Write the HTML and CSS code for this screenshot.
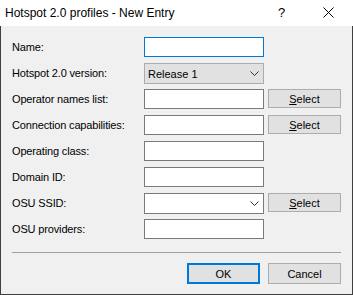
FILE: index.html
```html
<!DOCTYPE html>
<html>
<head>
<meta charset="utf-8">
<link rel="stylesheet" href="styles.css">
</head>
<body>
<div class="window">
  <div class="titlebar">
    <span class="title">Hotspot 2.0 profiles - New Entry</span>
    <span class="help">?</span>
    <span class="close">
      <svg width="11" height="11" viewBox="0 0 11 11"><path d="M0.5 0.5 L10.5 10.5 M10.5 0.5 L0.5 10.5" stroke="#000" stroke-width="1" fill="none"/></svg>
    </span>
  </div>
  <div class="client">
    <div class="form">
      <label class="lbl">Name:</label>
      <div class="input focused"></div>
      <div></div>

      <label class="lbl">Hotspot 2.0 version:</label>
      <div class="combo">
        <span>Release 1</span>
        <svg class="chev" width="9" height="5" viewBox="0 0 9 5"><path d="M0.5 0.5 L4.5 4.5 L8.5 0.5" stroke="#333" stroke-width="1" fill="none"/></svg>
      </div>
      <div></div>

      <label class="lbl">Operator names list:</label>
      <div class="input"></div>
      <button class="btn sel"><u>S</u>elect</button>

      <label class="lbl">Connection capabilities:</label>
      <div class="input"></div>
      <button class="btn sel"><u>S</u>elect</button>

      <label class="lbl">Operating class:</label>
      <div class="input"></div>
      <div></div>

      <label class="lbl">Domain ID:</label>
      <div class="input"></div>
      <div></div>

      <label class="lbl">OSU SSID:</label>
      <div class="input editcombo">
        <svg class="chev" width="9" height="5" viewBox="0 0 9 5"><path d="M0.5 0.5 L4.5 4.5 L8.5 0.5" stroke="#333" stroke-width="1" fill="none"/></svg>
      </div>
      <button class="btn sel"><u>S</u>elect</button>

      <label class="lbl">OSU providers:</label>
      <div class="input"></div>
      <div></div>
    </div>
    <div class="sep"></div>
    <div class="actions">
      <button class="btn big default">OK</button>
      <button class="btn big">Cancel</button>
    </div>
  </div>
</div>
</body>
</html>
```

FILE: styles.css
```css
html, body {
  margin: 0;
  padding: 0;
  background: #f0f0f0;
}
body {
  width: 353px;
  height: 295px;
  overflow: hidden;
  font-family: "Liberation Sans", Arial, sans-serif;
  font-size: 11px;
  color: #000;
}
.window {
  width: 353px;
  height: 295px;
  display: flex;
  flex-direction: column;
}
.titlebar {
  height: 26px;
  background: #fff;
  display: flex;
  align-items: center;
  box-sizing: border-box;
  padding-left: 5px;
  flex: none;
}
.title {
  font-size: 12px;
  flex: 1;
  padding-bottom: 1px;
}
.help {
  font-size: 13px;
  width: 12px;
  margin-right: 33px;
  padding-bottom: 1px;
}
.close {
  width: 11px;
  height: 11px;
  margin-right: 19px;
  display: flex;
  margin-bottom: 1px;
}
.client {
  flex: 1;
  border: 1px solid #3f3f3f;
  border-top: none;
  padding: 11px 11px 0 11px;
  display: flex;
  flex-direction: column;
}
.form {
  display: grid;
  grid-template-columns: 132px 124px 73px;
  grid-auto-rows: 20px;
  row-gap: 6px;
  align-items: start;
}
.lbl {
  align-self: center;
  white-space: nowrap;
  letter-spacing: -0.15px;
}
.input {
  width: 120px;
  height: 20px;
  box-sizing: border-box;
  background: #fff;
  border: 1px solid #7a7a7a;
}
.input.focused {
  border-color: #0078d7;
}
.combo {
  width: 120px;
  height: 21px;
  box-sizing: border-box;
  background: #e1e1e1;
  border: 1px solid #adadad;
  display: flex;
  align-items: center;
  padding: 0 0 0 3px;
}
.combo span {
  flex: 1;
  padding-top: 1px;
}
.combo .chev, .editcombo .chev {
  margin-right: 4px;
}
.editcombo {
  display: flex;
  align-items: center;
  justify-content: flex-end;
  height: 21px;
}
.btn {
  font-family: "Liberation Sans", Arial, sans-serif;
  font-size: 11px;
  color: #000;
  background: #e1e1e1;
  border: 1px solid #adadad;
  box-sizing: border-box;
  padding: 0;
  margin: 0;
}
.sel {
  width: 73px;
  height: 19px;
}
.sel u {
  text-decoration: underline;
}
.sep {
  height: 1px;
  background: #a0a0a0;
  margin-top: 13px;
  width: 329px;
}
.actions {
  display: flex;
  justify-content: flex-end;
  gap: 8px;
  margin-top: 10px;
  width: 329px;
}
.big {
  width: 73px;
  height: 21px;
}
.default {
  border: 2px solid #0078d7;
}
```
